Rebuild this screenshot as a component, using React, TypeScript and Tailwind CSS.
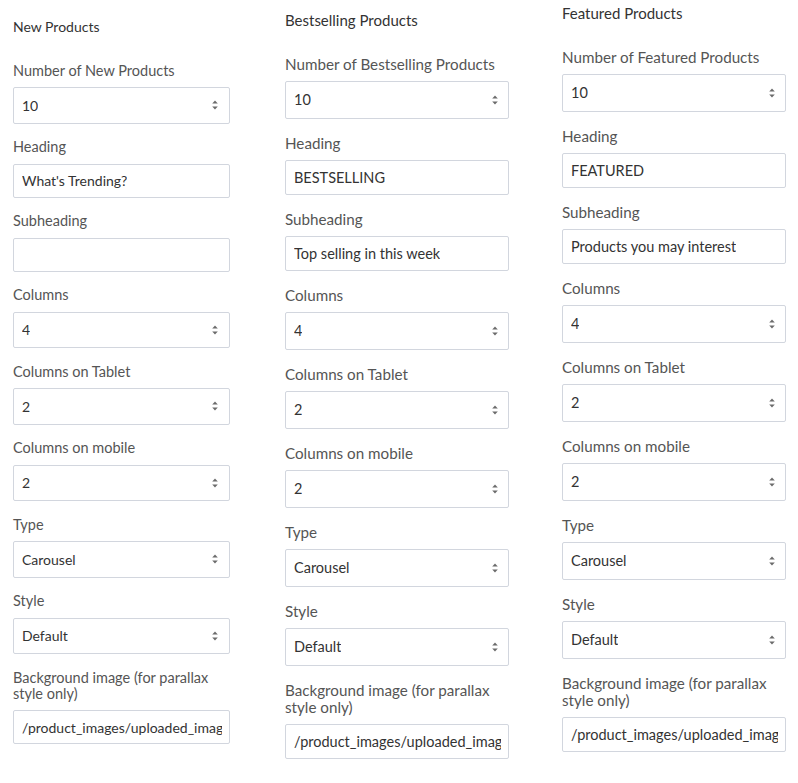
import React from 'react';

type Size = {
    title: string;
    label: string;
    select: string;
    text: string;
    value: string;
    arrow: string;
};

const small: Size = {
    title: 'text-[14px] leading-[18px]',
    label: 'text-[14.5px] leading-[16px] mb-[8.5px]',
    select: 'h-[36.5px]',
    text: 'h-[34px]',
    value: 'text-[14px]',
    arrow: 'right-[10px]',
};

const medium: Size = {
    title: 'text-[15px] leading-[18px]',
    label: 'text-[15.2px] leading-[17px] mb-[8.5px]',
    select: 'h-[38px]',
    text: 'h-[35px]',
    value: 'text-[14.5px]',
    arrow: 'right-[9px]',
};

type FieldDef = { label: string; value: string; kind: 'select' | 'text' };

const Arrows: React.FC = () => (
    <svg width="8" height="12" viewBox="0 0 8 12" className="text-[#6b6b6b]">
        <path d="M1.2 4.6 L4 1.4 L6.8 4.6 Z" fill="currentColor" />
        <path d="M1.2 7.4 L4 10.6 L6.8 7.4 Z" fill="currentColor" />
    </svg>
);

const Field: React.FC<{ field: FieldDef; size: Size; first: boolean }> = ({ field, size, first }) => {
    const isSelect = field.kind === 'select';
    return (
        <div className={first ? '' : 'mt-[15.5px]'}>
            <div className={`${size.label} text-[#555]`}>{field.label}</div>
            <div
                className={`relative flex items-center border border-[#d2d6de] rounded-[2px] bg-white pl-[8px] pr-[7px] overflow-hidden ${isSelect ? size.select : size.text}`}
            >
                <span className={`${size.value} text-[#333] whitespace-nowrap overflow-hidden`}>{field.value}</span>
                {isSelect && (
                    <span className={`absolute top-1/2 -translate-y-1/2 flex ${size.arrow}`}>
                        <Arrows />
                    </span>
                )}
            </div>
        </div>
    );
};

const Column: React.FC<{ title: string; fields: FieldDef[]; size: Size; className: string }> = ({ title, fields, size, className }) => (
    <div className={`flex flex-col shrink-0 ${className}`}>
        <h3 className={`${size.title} text-[#333]`}>{title}</h3>
        <div className="mt-[26.5px]">
            {fields.map((f, i) => (
                <Field key={f.label} field={f} size={size} first={i === 0} />
            ))}
        </div>
    </div>
);

const bgPath = '/product_images/uploaded_images/parallax-bg.jpg';

const makeFields = (countLabel: string, heading: string, sub: string): FieldDef[] => [
    { label: countLabel, value: '10', kind: 'select' },
    { label: 'Heading', value: heading, kind: 'text' },
    { label: 'Subheading', value: sub, kind: 'text' },
    { label: 'Columns', value: '4', kind: 'select' },
    { label: 'Columns on Tablet', value: '2', kind: 'select' },
    { label: 'Columns on mobile', value: '2', kind: 'select' },
    { label: 'Type', value: 'Carousel', kind: 'select' },
    { label: 'Style', value: 'Default', kind: 'select' },
    { label: 'Background image (for parallax style only)', value: bgPath, kind: 'text' },
];

export default function App() {
    return (
        <div className="w-[798px] h-[783px] bg-white overflow-hidden flex items-start pl-[13px]" style={{ fontFamily: 'Lato, "Liberation Sans", sans-serif' }}>
            <Column
                title="New Products"
                size={small}
                className="w-[217px] pt-[18px]"
                fields={makeFields('Number of New Products', "What's Trending?", '')}
            />
            <Column
                title="Bestselling Products"
                size={medium}
                className="w-[224px] ml-[55px] pt-[11px]"
                fields={makeFields('Number of Bestselling Products', 'BESTSELLING', 'Top selling in this week')}
            />
            <Column
                title="Featured Products"
                size={medium}
                className="w-[224px] ml-[53px] pt-[4px]"
                fields={makeFields('Number of Featured Products', 'FEATURED', 'Products you may interest')}
            />
        </div>
    );
}
